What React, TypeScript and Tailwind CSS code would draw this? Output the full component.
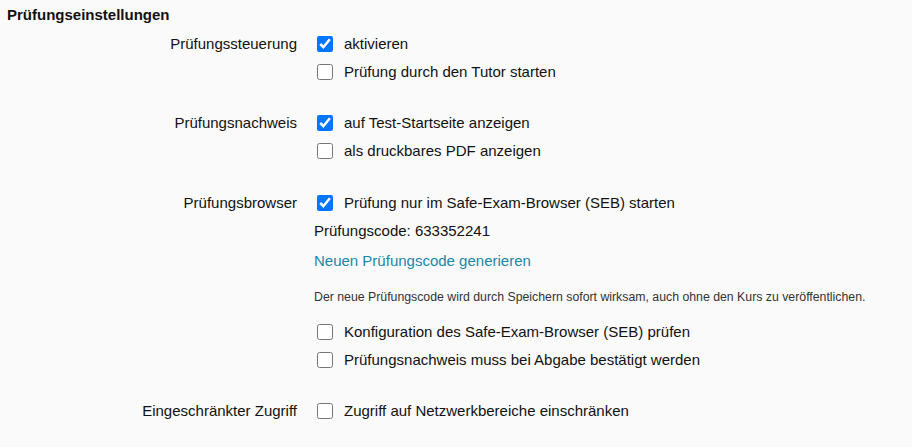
import React from 'react';

type Option = { label: string; checked?: boolean };

const CheckRow: React.FC<Option> = ({ label, checked }) => (
  <label className="flex h-7 items-center">
    <input
      type="checkbox"
      defaultChecked={checked}
      className="m-0 h-4 w-4 shrink-0"
    />
    <span className="ml-[11px]">{label}</span>
  </label>
);

const Section: React.FC<{ title: string; children: React.ReactNode; className?: string }> = ({
  title,
  children,
  className,
}) => (
  <div className={`grid grid-cols-[290px_1fr] gap-x-[20px] ${className ?? ''}`}>
    <div className="flex h-7 items-center justify-end">{title}</div>
    <div className="flex flex-col">{children}</div>
  </div>
);

const App: React.FC = () => {
  return (
    <div
      className="min-h-[447px] w-[912px] bg-[#fafafa] pl-[7px] text-[15px] text-[#111]"
      style={{ fontFamily: '"Liberation Sans", Arial, sans-serif' }}
    >
      <h2 className="flex h-[30px] items-center text-[15px] font-bold">Prüfungseinstellungen</h2>

      <Section title="Prüfungssteuerung" className="mb-[23px]">
        <CheckRow label="aktivieren" checked />
        <CheckRow label="Prüfung durch den Tutor starten" />
      </Section>

      <Section title="Prüfungsnachweis" className="mb-[24px]">
        <CheckRow label="auf Test-Startseite anzeigen" checked />
        <CheckRow label="als druckbares PDF anzeigen" />
      </Section>

      <Section title="Prüfungsbrowser" className="mb-[23px]">
        <CheckRow label="Prüfung nur im Safe-Exam-Browser (SEB) starten" checked />
        <div className="-ml-[3px] flex h-7 items-center">Prüfungscode: 633352241</div>
        <a href="#" className="-ml-[3px] mt-[2px] flex h-7 items-center text-[#1b86a6]">
          Neuen Prüfungscode generieren
        </a>
        <p className="-ml-[3px] mt-[8px] flex h-7 items-center text-[12.3px] text-[#333]">
          Der neue Prüfungscode wird durch Speichern sofort wirksam, auch ohne den Kurs zu veröffentlichen.
        </p>
        <div className="mt-[7px]">
          <CheckRow label="Konfiguration des Safe-Exam-Browser (SEB) prüfen" />
          <CheckRow label="Prüfungsnachweis muss bei Abgabe bestätigt werden" />
        </div>
      </Section>

      <Section title="Eingeschränkter Zugriff">
        <CheckRow label="Zugriff auf Netzwerkbereiche einschränken" />
      </Section>
    </div>
  );
};

export default App;
